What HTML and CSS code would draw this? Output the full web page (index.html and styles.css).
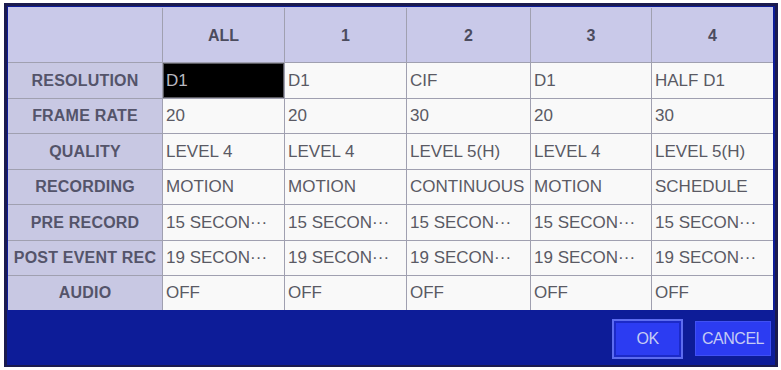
FILE: index.html
```html
<!DOCTYPE html>
<html>
<head>
<meta charset="utf-8">
<link rel="stylesheet" href="styles.css">
</head>
<body>
<div class="frame">
  <div class="grid">
    <div class="hd corner"></div>
    <div class="hd">ALL</div>
    <div class="hd">1</div>
    <div class="hd">2</div>
    <div class="hd">3</div>
    <div class="hd">4</div>

    <div class="lb">RESOLUTION</div>
    <div class="c sel">D1</div>
    <div class="c">D1</div>
    <div class="c">CIF</div>
    <div class="c">D1</div>
    <div class="c">HALF D1</div>

    <div class="lb">FRAME RATE</div>
    <div class="c">20</div>
    <div class="c">20</div>
    <div class="c">30</div>
    <div class="c">20</div>
    <div class="c">30</div>

    <div class="lb">QUALITY</div>
    <div class="c">LEVEL 4</div>
    <div class="c">LEVEL 4</div>
    <div class="c">LEVEL 5(H)</div>
    <div class="c">LEVEL 4</div>
    <div class="c">LEVEL 5(H)</div>

    <div class="lb">RECORDING</div>
    <div class="c">MOTION</div>
    <div class="c">MOTION</div>
    <div class="c">CONTINUOUS</div>
    <div class="c">MOTION</div>
    <div class="c">SCHEDULE</div>

    <div class="lb">PRE RECORD</div>
    <div class="c">15 SECON···</div>
    <div class="c">15 SECON···</div>
    <div class="c">15 SECON···</div>
    <div class="c">15 SECON···</div>
    <div class="c">15 SECON···</div>

    <div class="lb">POST EVENT REC</div>
    <div class="c">19 SECON···</div>
    <div class="c">19 SECON···</div>
    <div class="c">19 SECON···</div>
    <div class="c">19 SECON···</div>
    <div class="c">19 SECON···</div>

    <div class="lb">AUDIO</div>
    <div class="c">OFF</div>
    <div class="c">OFF</div>
    <div class="c">OFF</div>
    <div class="c">OFF</div>
    <div class="c">OFF</div>
  </div>
  <div class="footer">
    <div class="btn ok">OK</div>
    <div class="btn cancel">CANCEL</div>
  </div>
</div>
</body>
</html>
```

FILE: styles.css
```css
html, body {
  margin: 0;
  padding: 0;
  background: #ffffff;
}
body {
  width: 781px;
  height: 370px;
  overflow: hidden;
  font-family: "Liberation Sans", Arial, sans-serif;
}
.frame {
  box-sizing: border-box;
  margin: 3px 3px 0 4px;
  width: 774px;
  height: 364px;
  border: 3px solid #1b1b4e;
  border-bottom-width: 2px;
  background: #0d1c98;
  display: flex;
  flex-direction: column;
}
.grid {
  margin: 1px 2px 0 1px;
  display: grid;
  grid-template-columns: 154px 121px 121px 123px 120px 121px;
  grid-template-rows: 54px 35px 34px 35px 34px 35px 34px 34px;
  gap: 1px;
  background: #a0a0b0;
  border-top: 1px solid #c8c8e6;
  font-size: 17px;
}
.hd {
  background: #c9c9e9;
  color: #4c4c5e;
  display: flex;
  align-items: center;
  justify-content: center;
  font-size: 16px;
  font-weight: bold;
  padding-top: 2px;
}
.lb {
  background: #c8c8e3;
  color: #54546a;
  display: flex;
  align-items: center;
  justify-content: center;
  white-space: nowrap;
  font-weight: bold;
  font-size: 16px;
  letter-spacing: 0.2px;
}
.c {
  background: #f9f9f9;
  color: #5a5a64;
  display: flex;
  align-items: center;
  padding-left: 3px;
  white-space: nowrap;
  overflow: hidden;
}
.c.sel {
  background: #000000;
  color: #b8b8c0;
  box-shadow: inset 0 0 0 1px #5a5a60;
}
.footer {
  flex: 1;
  display: flex;
  align-items: center;
  justify-content: flex-end;
  gap: 12px;
  padding-right: 4px;
}
.btn {
  box-sizing: border-box;
  background: #2c3cf2;
  color: #c4cbf4;
  font-size: 16px;
  letter-spacing: -0.5px;
  display: flex;
  align-items: center;
  justify-content: center;
}
.ok {
  width: 71px;
  height: 40px;
  border: 2px solid #5d6cf0;
  box-shadow: inset 0 0 0 2px #1c2ac8;
  margin-top: 2px;
}
.cancel {
  width: 76px;
  height: 35px;
  border: 1px solid #4050f4;
  margin-top: 2px;
}
```
